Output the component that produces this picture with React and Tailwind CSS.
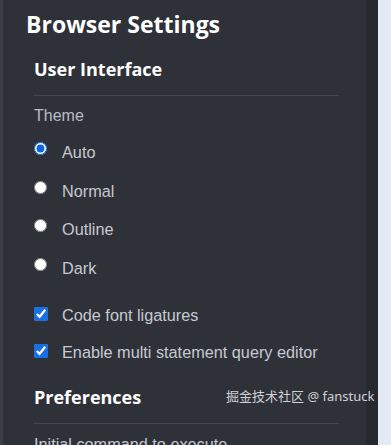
import React, { useState } from "react";

const themes = ["Auto", "Normal", "Outline", "Dark"];

export default function App() {
  const [theme, setTheme] = useState("Auto");
  const [ligatures, setLigatures] = useState(true);
  const [multi, setMulti] = useState(true);

  return (
    <div className="h-[445px] w-[391px] flex overflow-hidden bg-[#2f3139]">
      {/* left edge */}
      <div className="w-[3px] bg-[#3c3e46] flex-none" />

      {/* settings panel */}
      <div className="flex-1 relative pl-[23px] pr-[27px] pt-[8px] font-['Liberation_Sans',Arial,sans-serif]">
        <h1 className="text-[23px] leading-[32px] font-bold text-white font-['Open_Sans',sans-serif]">
          Browser Settings
        </h1>

        <div className="pl-[7px] pt-[17px]">
          <h2 className="text-[18px] leading-[24px] font-bold text-white font-['Open_Sans',sans-serif] pl-[1px]">
            User Interface
          </h2>
          <div className="mt-[14px] h-px bg-[#45474f]" />

          <div className="pt-[9px] text-[16px] leading-[22px] text-[#b9bdc5] pl-[1px]">Theme</div>

          <div className="pt-[12px] flex flex-col">
            {themes.map((t) => (
              <label key={t} className="h-[38.5px] flex items-start gap-[15px] text-[16.25px] text-[#c6cad1] cursor-pointer">
                <input
                  type="radio"
                  name="theme"
                  checked={theme === t}
                  onChange={() => setTheme(t)}
                  className="mt-[3px] ml-[1px] w-[13px] h-[13px] accent-[#0b64e0]"
                />
                <span className="leading-[24px] pt-[1px]">{t}</span>
              </label>
            ))}
          </div>

          <div className="pt-[10px] flex flex-col">
            <label className="h-[37px] flex items-start gap-[14px] text-[16.25px] text-[#c6cad1]">
              <input
                type="checkbox"
                checked={ligatures}
                onChange={(e) => setLigatures(e.target.checked)}
                className="mt-[4px] ml-[1px] w-[14px] h-[14px] accent-[#1a6ee6]"
              />
              <span className="leading-[24px]">Code font ligatures</span>
            </label>
            <label className="h-[37px] flex items-start gap-[14px] text-[16.25px] text-[#c6cad1]">
              <input
                type="checkbox"
                checked={multi}
                onChange={(e) => setMulti(e.target.checked)}
                className="mt-[4px] ml-[1px] w-[14px] h-[14px] accent-[#1a6ee6]"
              />
              <span className="leading-[24px]">Enable multi statement query editor</span>
            </label>
          </div>

          <h2 className="pt-[8px] text-[18px] leading-[24px] font-bold text-white font-['Open_Sans',sans-serif] pl-[1px]">
            Preferences
          </h2>
          <div className="mt-[14px] h-px bg-[#45474f]" />
          <div className="pt-[9px] text-[16.25px] leading-[22px] text-[#c6cad1] pl-[1px]">
            Initial command to execute
          </div>
        </div>

        {/* watermark */}
        <div className="absolute left-[223px] top-[386px] text-[13px] leading-[20px] text-[#cfd2d6] whitespace-nowrap font-['Noto_Sans','Noto_Sans_CJK_SC',sans-serif]">
          掘金技术社区 @ fanstuck
        </div>
      </div>

      {/* scroll gutter */}
      <div className="w-[12px] bg-[#272930] flex-none" />
      {/* right pane */}
      <div className="w-[13px] bg-[#e4eaf3] flex-none" />
    </div>
  );
}
